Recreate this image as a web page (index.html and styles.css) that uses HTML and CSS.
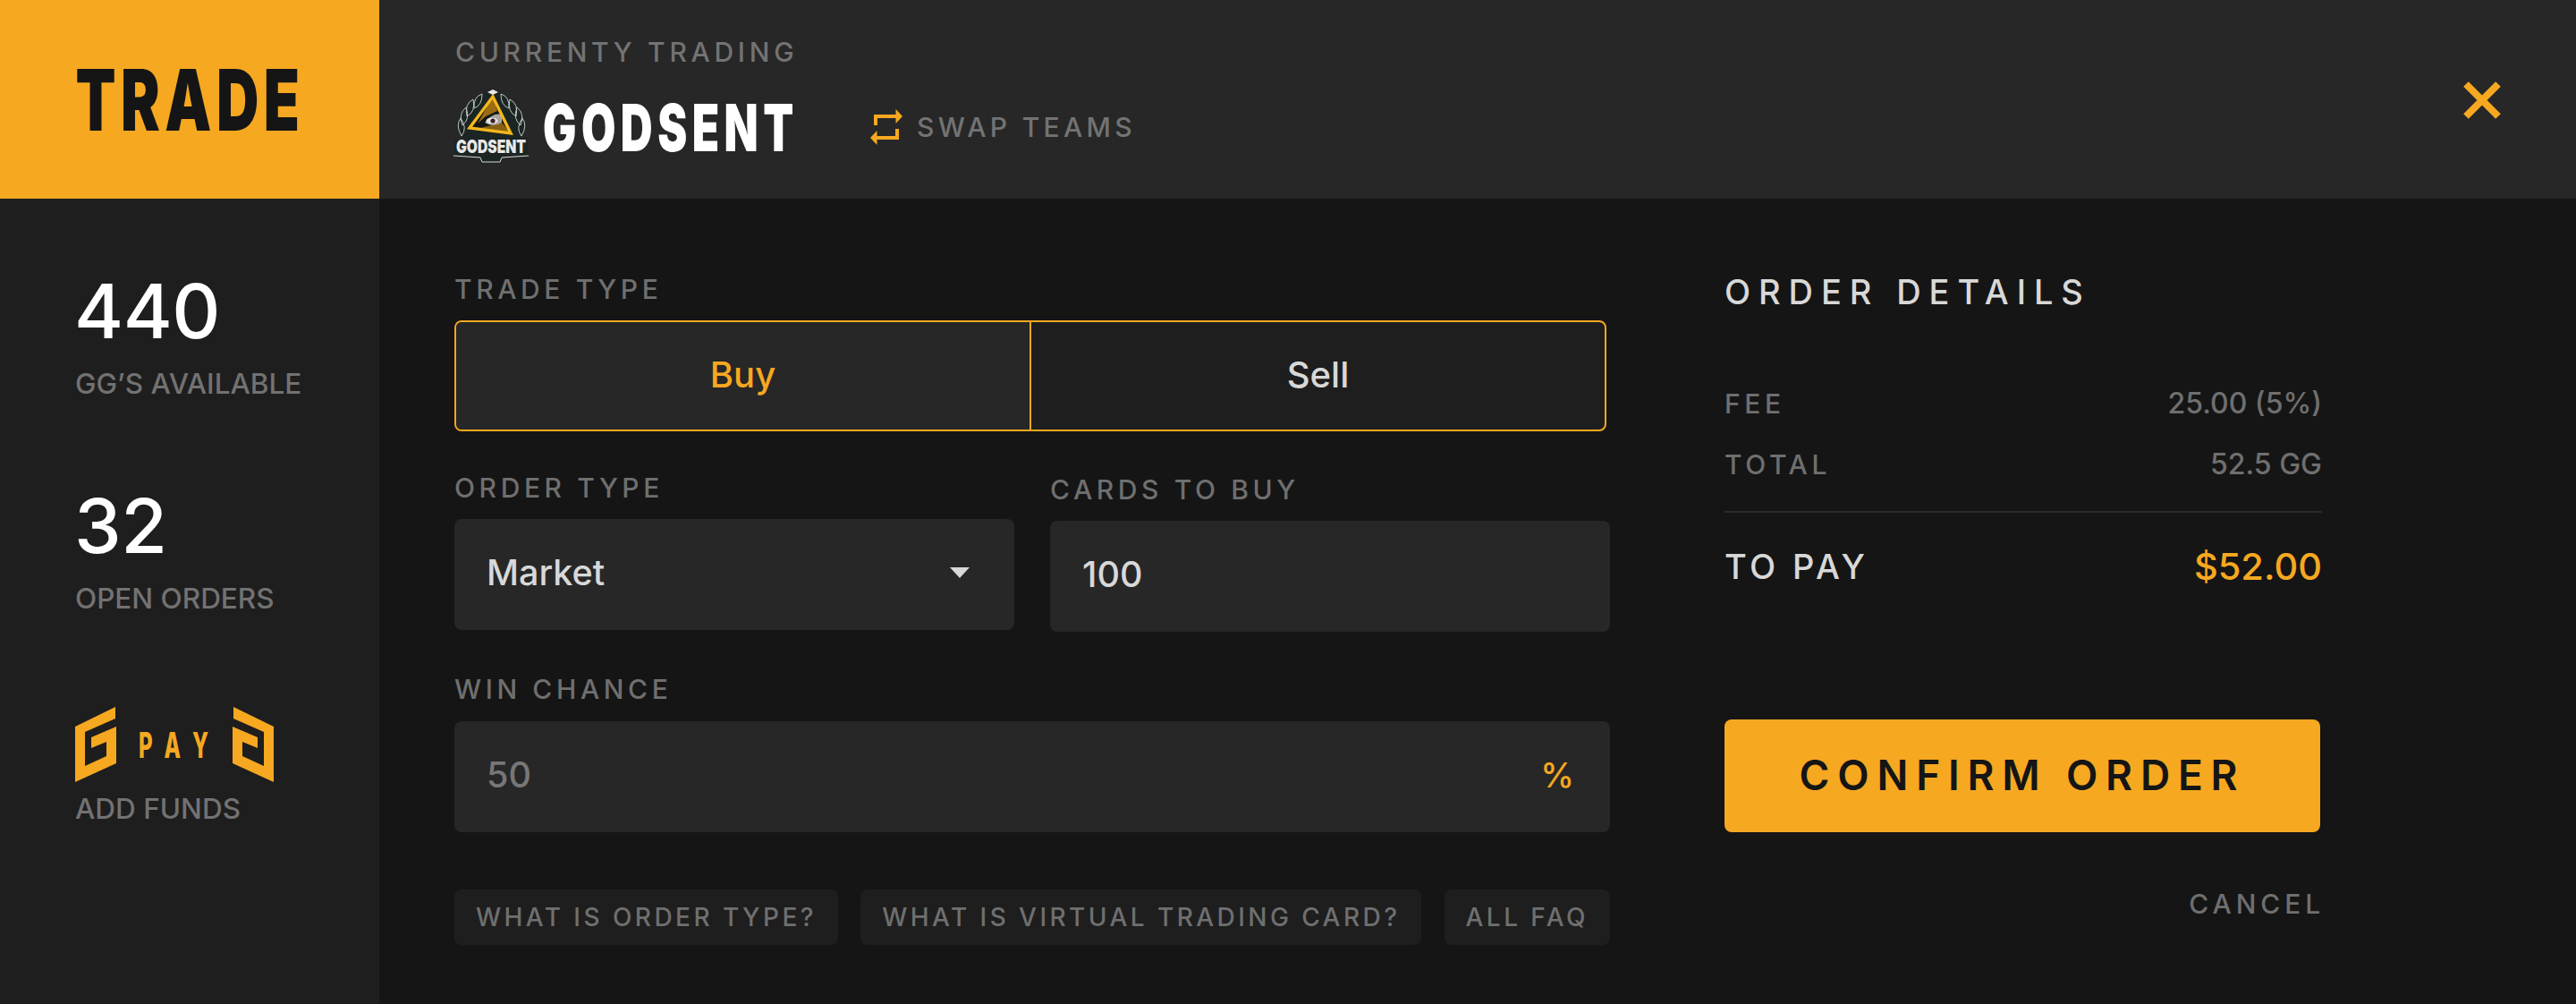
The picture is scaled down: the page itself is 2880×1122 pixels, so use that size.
FILE: index.html
```html
<!DOCTYPE html>
<html lang="en">
<head>
<meta charset="utf-8">
<title>Trade</title>
<link rel="stylesheet" href="styles.css">
</head>
<body>
<div class="app">
  <div class="brand"><span class="brand-text">TRADE</span></div>
  <header class="topbar">
    <div class="topbar-info">
      <div class="current-label">CURRENTY TRADING</div>
      <div class="team-row">
        <svg class="team-logo" viewBox="0 0 96 96" aria-hidden="true">
          <defs>
            <g id="wing">
              <path d="M40 10 L48 8 L48 62 L16 62 L20 30Z" fill="#1b2523"/>
              <path d="M38 11 Q28 14 29 27 Q38 24 38 11Z M28 17 Q18 22 21 36 Q31 31 28 17Z M20 26 Q11 33 16 46 Q25 39 20 26Z M14 38 Q8 46 15 58 Q22 49 14 38Z" fill="#1b2523" stroke="#cfd5d3" stroke-width=".9" stroke-linejoin="round"/>
            </g>
          </defs>
          <use href="#wing"/>
          <use href="#wing" transform="matrix(-1 0 0 1 97 0)"/>
          <path d="M44 9 L50 6 L56 9 L50 12Z" fill="#e8e8e8"/>
          <path d="M50 14 L24 49 L70 55Z" fill="#141716"/>
          <path d="M50 14 L33 44 L42 36 L55 30Z" fill="#c98a12" opacity=".75"/>
          <path d="M36 49 L62 55 L70 55 L60 43Z" fill="#d3930f" opacity=".6"/>
          <path d="M41 43 Q50 31 60 34 L60 43 Q50 49 41 43Z" fill="#a9a5a2"/>
          <ellipse cx="49" cy="41" rx="6.500" ry="3.500" fill="#e8e4e4"/>
          <circle cx="50" cy="41" r="2.600" fill="#3d1f28"/>
          <path d="M50 14 L24 49 L70 55Z" fill="none" stroke="#f3b71a" stroke-width="3.400" stroke-linejoin="miter"/>
          <path d="M8 62 L88 60 L90 80 L60 81 L58 87 L38 87 L36 81 L6 80Z" fill="#1b2523"/>
          <path d="M6 80 L36 82 L38 87 M90 80 L60 82 L58 87 M38 87 H58" fill="none" stroke="#d5dad8" stroke-width="1"/>
          <text class="logo-word" x="48" y="77" text-anchor="middle" textLength="78" lengthAdjust="spacingAndGlyphs">GODSENT</text>
        </svg>
        <span class="team-name">GODSENT</span>
        <div class="swap">
          <svg class="swap-icon" viewBox="0 0 36 40" aria-hidden="true">
            <path d="M6 18V8H29" fill="none" stroke="#f6a821" stroke-width="4"/>
            <path d="M28.500 0L36 8L28.500 16Z" fill="#f6a821"/>
            <path d="M30 22V32H7" fill="none" stroke="#f6a821" stroke-width="4"/>
            <path d="M7.500 24L0 32L7.500 40Z" fill="#f6a821"/>
          </svg>
          <span class="swap-text">SWAP TEAMS</span>
        </div>
      </div>
    </div>
    <svg class="close-icon" viewBox="0 0 42 42" aria-hidden="true">
      <path d="M3 3L39 39M39 3L3 39" stroke="#f6a821" stroke-width="8" fill="none"/>
    </svg>
  </header>

  <aside class="sidebar">
    <div class="stat">
      <div class="stat-value">440</div>
      <div class="stat-label">GG’S AVAILABLE</div>
    </div>
    <div class="stat">
      <div class="stat-value">32</div>
      <div class="stat-label">OPEN ORDERS</div>
    </div>
    <div class="stat gpay-stat">
      <svg class="gpay" viewBox="0 0 223 85" aria-hidden="true">
        <path id="gp" d="M0 22 L45 0 V13 L11 28 V66 L35 55 V39 L18 46 V34 L46 22 V63 L0 84Z" fill="#f6a821"/>
        <use href="#gp" transform="matrix(-1 0 0 1 222 0)"/>
        <text class="gpay-word" transform="translate(71 57) scale(.6 1)" textLength="130" lengthAdjust="spacing">PAY</text>
      </svg>
      <div class="stat-label funds">ADD FUNDS</div>
    </div>
  </aside>

  <main class="content">
    <section class="form">
      <div class="label">TRADE TYPE</div>
      <div class="toggle">
        <div class="toggle-opt active">Buy</div>
        <div class="toggle-opt">Sell</div>
      </div>
      <div class="two-col">
        <div class="field">
          <div class="label">ORDER TYPE</div>
          <div class="box select"><span>Market</span><span class="caret"></span></div>
        </div>
        <div class="field shifted">
          <div class="label">CARDS TO BUY</div>
          <div class="box"><span>100</span></div>
        </div>
      </div>
      <div class="field win">
        <div class="label">WIN CHANCE</div>
        <div class="box select muted"><span>50</span><span class="unit">%</span></div>
      </div>
      <div class="chips">
        <span class="chip">WHAT IS ORDER TYPE?</span>
        <span class="chip">WHAT IS VIRTUAL TRADING CARD?</span>
        <span class="chip">ALL FAQ</span>
      </div>
    </section>

    <section class="details">
      <h2 class="details-title">ORDER DETAILS</h2>
      <div class="row first"><span class="row-key">FEE</span><span class="row-val">25.00 (5%)</span></div>
      <div class="row second"><span class="row-key">TOTAL</span><span class="row-val">52.5 GG</span></div>
      <div class="row pay"><span class="pay-key">TO PAY</span><span class="pay-val">$52.00</span></div>
      <div class="confirm">CONFIRM ORDER</div>
      <div class="cancel">CANCEL</div>
    </section>
  </main>
</div>
</body>
</html>
```
FILE: styles.css
```css
* { box-sizing: border-box; }
html, body { margin: 0; padding: 0; }
body {
  background: #151515;
  font-family: Inter, "Liberation Sans", sans-serif;
  color: #ddd;
}
.app {
  display: grid;
  grid-template-columns: 424px 1fr;
  grid-template-rows: 222px 900px;
  width: 2880px;
  height: 1122px;
  overflow: hidden;
}
.brand {
  background: #f6a821;
  display: flex;
  align-items: center;
  justify-content: center;
  padding-left: 2px;
}
.brand-text {
  font-family: Inter, sans-serif;
  font-weight: 900;
  font-size: 95px;
  line-height: 1;
  color: #151515;
  display: inline-block;
  transform: scaleX(.69);
  letter-spacing: 8px;
}
.topbar {
  background: #272727;
  display: flex;
  justify-content: space-between;
  padding: 0 84px 0 85px;
}
.topbar-info { padding-top: 42px; }
.current-label {
  font-size: 30px;
  line-height: 32px;
  font-weight: 500;
  letter-spacing: 4.7px;
  color: #737373;
}
.team-row {
  display: flex;
  align-items: center;
  margin-top: 26px;
  height: 84px;
}
.team-logo { width: 96px; height: 96px; margin: 0 -8px; flex: none; }
.logo-word { font-family: Inter, sans-serif; font-weight: 900; font-size: 20px; fill: #e8e8e8; }
.team-name {
  font-family: Inter, sans-serif;
  font-weight: 900;
  font-size: 73px;
  line-height: 1;
  color: #fff;
  display: inline-block;
  width: 300px;
  margin-left: 18px;
  transform: scaleX(.68);
  transform-origin: left center;
  letter-spacing: 8px;
  white-space: nowrap;
}
.swap { display: flex; align-items: center; margin-left: 66px; gap: 16px; }
.swap-icon { width: 36px; height: 40px; flex: none; }
.swap-text { font-size: 30px; font-weight: 500; letter-spacing: 4.3px; color: #737373; white-space: nowrap; }
.close-icon { width: 42px; height: 42px; margin-top: 91px; flex: none; }

.sidebar {
  background: #1e1e1e;
  padding: 80px 0 0 84px;
  display: flex;
  flex-direction: column;
  gap: 94px;
}
.stat-value { font-size: 84px; line-height: 92px; font-weight: 500; letter-spacing: -.5px; margin-left: -1px; color: #fff; }
.stat-label { font-size: 31.5px; line-height: 38px; margin-top: 16px; font-weight: 500; color: #727272; }
.gpay-stat { margin-top: 8px; }
.gpay { width: 223px; height: 85px; display: block; }
.gpay-word { font-family: Inter, sans-serif; font-weight: 800; font-size: 40px; fill: #f6a821; }
.stat-label.funds { margin-top: 10px; }

.content { display: flex; padding: 0 0 0 84px; }
.form { width: 1292px; padding-top: 85px; }
.label { font-size: 30px; line-height: 32px; font-weight: 500; letter-spacing: 4.6px; color: #6f6f6f; white-space: nowrap; }
.toggle {
  display: flex;
  width: 1288px;
  height: 124px;
  margin-top: 19px;
  border: 2px solid #f6a821;
  border-radius: 8px;
  background: #1e1e1e;
  overflow: hidden;
}
.toggle-opt {
  flex: 1;
  display: flex;
  align-items: center;
  justify-content: center;
  padding-bottom: 4px;
  font-size: 40px;
  font-weight: 500;
  color: #d8d8d8;
}
.toggle-opt.active { background: #272727; color: #f6a821; border-right: 2px solid #f6a821; }
.two-col { display: flex; gap: 40px; margin-top: 47px; }
.field { width: 626px; }
.shifted { margin-top: 2px; }
.box {
  height: 124px;
  margin-top: 19px;
  background: #272727;
  border-radius: 8px;
  padding: 0 36px 4px;
  display: flex;
  align-items: center;
  font-size: 39.5px;
  font-weight: 500;
  color: #d8d8d8;
}
.select { justify-content: space-between; }
.caret {
  width: 0; height: 0;
  border-left: 11px solid transparent;
  border-right: 11px solid transparent;
  border-top: 12px solid #d8d8d8;
  margin-right: 14px;
}
.win { width: 1292px; margin-top: 48px; }
.win .box { margin-top: 20px; }
.box.muted { color: #777; }
.unit { color: #f6a821; font-size: 38px; margin-right: 4px; }
.chips { display: flex; justify-content: space-between; width: 1292px; margin-top: 64px; }
.chip {
  height: 62px;
  display: flex;
  align-items: center;
  flex: none;
  padding: 0 24px;
  border-radius: 8px;
  background: #1e1e1e;
  color: #6f6f6f;
  font-size: 28px;
  font-weight: 500;
  letter-spacing: 3.45px;
  white-space: nowrap;
}
.details { width: 668px; margin-left: 128px; padding-top: 82px; }
.details-title {
  margin: 0;
  font-size: 38px;
  line-height: 44px;
  font-weight: 500;
  letter-spacing: 8.9px;
  color: #d8d8d8;
}
.row { display: flex; justify-content: space-between; align-items: center; font-size: 30px; line-height: 36px; font-weight: 500; }
.first { margin-top: 85px; }
.second { margin-top: 32px; padding-bottom: 34px; border-bottom: 2px solid #2b2b2b; }
.row-key { letter-spacing: 4.6px; color: #6f6f6f; }
.row-val { color: #6f6f6f; font-size: 32px; }
.pay { margin-top: 36px; font-size: 38px; line-height: 48px; }
.pay-key { letter-spacing: 4.4px; color: #d8d8d8; }
.pay-val { color: #f6a821; font-size: 41.5px; }
.confirm {
  width: 666px;
  height: 126px;
  margin-top: 147px;
  padding-bottom: 2px;
  background: #f6a821;
  border-radius: 8px;
  display: flex;
  align-items: center;
  justify-content: center;
  color: #151515;
  font-size: 46px;
  font-weight: 600;
  letter-spacing: 8.8px;
}
.cancel { margin-top: 62px; margin-right: -3px; text-align: right; font-size: 30px; line-height: 36px; font-weight: 500; letter-spacing: 4.9px; color: #6f6f6f; }
```
